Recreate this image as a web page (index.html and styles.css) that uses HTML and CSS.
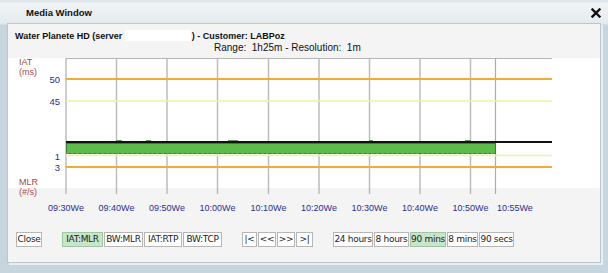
FILE: index.html
```html
<!DOCTYPE html>
<html lang="en">
<head>
  <meta charset="UTF-8" />
  <title>Media Window</title>
  <link rel="stylesheet" href="styles.css">
</head>
<body>
  <div class="window">
    <div class="titlebar">
      <span class="title">Media Window</span>
      <svg class="close-x" width="10" height="10" viewBox="0 0 10 10">
        <path d="M1.5 1.5 L8.5 8.5 M8.5 1.5 L1.5 8.5" stroke="#111" stroke-width="2.4" stroke-linecap="square" />
      </svg>
    </div>

    <div class="panel">
      <div class="info">
        <div class="heading">Water Planete HD (server <span class="masked"></span>) - Customer: LABPoz</div>
        <div class="range">Range:&nbsp; 1h25m - Resolution:&nbsp; 1m</div>
      </div>

      <!-- chart: coordinates match the page -->
      <svg class="chart" width="592" height="162" viewBox="8 53 592 162">
        <rect x="8" y="58" width="592" height="130" fill="#fff" />
        <line x1="66" y1="58.5" x2="552" y2="58.5" stroke="#b4b4b4" />

        <g stroke="#bcbcbc" stroke-width="1.5">
          <line x1="66" y1="58" x2="66" y2="194" />
          <line x1="116.5" y1="58" x2="116.5" y2="194" />
          <line x1="167" y1="58" x2="167" y2="194" />
          <line x1="217.5" y1="58" x2="217.5" y2="194" />
          <line x1="268.5" y1="58" x2="268.5" y2="194" />
          <line x1="319" y1="58" x2="319" y2="194" />
          <line x1="369.5" y1="58" x2="369.5" y2="194" />
          <line x1="420" y1="58" x2="420" y2="194" />
          <line x1="470.5" y1="58" x2="470.5" y2="194" />
        </g>
        <line x1="495.5" y1="58" x2="495.5" y2="194" stroke="#98b898" stroke-width="1.2" />

        <!-- thresholds -->
        <line x1="66" y1="79" x2="552" y2="79" stroke="#f2aa38" stroke-width="2" />
        <line x1="66" y1="101" x2="552" y2="101" stroke="#eef2a4" stroke-width="1.5" />
        <line x1="66" y1="155.5" x2="552" y2="155.5" stroke="#eef2a4" stroke-width="1.5" />
        <line x1="66" y1="167" x2="552" y2="167" stroke="#f2aa38" stroke-width="2" />

        <!-- data -->
        <rect x="66.5" y="143.5" width="429" height="10" fill="#5dbb4b" stroke="#3f7a36" />
        <line x1="66" y1="153.5" x2="495" y2="153.5" stroke="#7a8a6a" stroke-dasharray="3 2" />
        <g fill="#6a9a5e">
          <rect x="116" y="140" width="6" height="2" />
          <rect x="146" y="140" width="5" height="2" />
          <rect x="228" y="140" width="10" height="2" />
          <rect x="369" y="140" width="4" height="2" />
          <rect x="465" y="140" width="6" height="2" />
        </g>
        <line x1="66" y1="142" x2="552" y2="142" stroke="#111" stroke-width="2" />

        <!-- axis labels -->
        <g class="axis-name">
          <text x="19" y="65">IAT</text>
          <text x="19" y="75">(ms)</text>
          <text x="19" y="185">MLR</text>
          <text x="19" y="195">(#/s)</text>
        </g>
        <g class="axis-value" text-anchor="end">
          <text x="60" y="83">50</text>
          <text x="60" y="105">45</text>
          <text x="60" y="160">1</text>
          <text x="60" y="171">3</text>
        </g>
        <g class="axis-time" text-anchor="middle">
          <text x="66" y="211">09:30We</text>
          <text x="116.5" y="211">09:40We</text>
          <text x="167" y="211">09:50We</text>
          <text x="217.5" y="211">10:00We</text>
          <text x="268.5" y="211">10:10We</text>
          <text x="319" y="211">10:20We</text>
          <text x="369.5" y="211">10:30We</text>
          <text x="420" y="211">10:40We</text>
          <text x="470.5" y="211">10:50We</text>
          <text x="497" y="211" text-anchor="start">10:55We</text>
        </g>
      </svg>

      <div class="controls">
        <div class="group">
          <button class="btn w-close">Close</button>
        </div>
        <div class="group">
          <button class="btn active w41">IAT:MLR</button>
          <button class="btn w39">BW:MLR</button>
          <button class="btn w38">IAT:RTP</button>
          <button class="btn w39">BW:TCP</button>
        </div>
        <div class="group">
          <button class="btn w15">|&lt;</button>
          <button class="btn w18">&lt;&lt;</button>
          <button class="btn w18">&gt;&gt;</button>
          <button class="btn w17">&gt;|</button>
        </div>
        <div class="group">
          <button class="btn w40">24 hours</button>
          <button class="btn w35">8 hours</button>
          <button class="btn active w36">90 mins</button>
          <button class="btn w31">8 mins</button>
          <button class="btn w35">90 secs</button>
        </div>
      </div>
    </div>
  </div>
</body>
</html>
```

FILE: styles.css
```css
body {
  margin: 0;
  padding: 0;
  width: 608px;
  height: 273px;
  overflow: hidden;
  background-color: #c6d5de;
  font-family: 'Liberation Sans', Arial, sans-serif;
}
.window {
  height: 273px;
  display: flex;
  flex-direction: column;
  background: linear-gradient(#dfe7ec 0, #dfe7ec 2px, #f1f4f6 3px, #e3eaee 24px, #c6d5de 25px);
}
.titlebar {
  height: 24px;
  display: flex;
  align-items: center;
  justify-content: space-between;
  padding: 1px 7px 0 26px;
  box-sizing: border-box;
}
.title {
  font-weight: bold;
  font-size: 9.5px;
  color: #111;
}
.close-x {
  display: block;
  margin-top: 1px;
}
.panel {
  margin: 0 8px 0 8px;
  height: 238px;
  background-color: #f4f4f4;
  box-shadow: 0 0 0 1px #b9c6cd, 2px 2px 0 1px #e9eef0;
}
.info {
  height: 29px;
  box-sizing: border-box;
  padding: 6px 0 0 7px;
  color: #111;
}
.heading {
  font-weight: bold;
  font-size: 9px;
  line-height: 12px;
  height: 12px;
  white-space: nowrap;
}
.masked {
  display: inline-block;
  width: 66px;
  height: 11px;
  background-color: #fff;
  vertical-align: -2px;
  margin-right: 1px;
}
.range {
  font-size: 10px;
  line-height: 11px;
  height: 11px;
  padding-left: 199px;
}
.chart {
  display: block;
}
.axis-name text {
  fill: #a84c48;
  font-size: 9px;
}
.axis-value text {
  fill: #2e2e8c;
  font-size: 9.5px;
}
.axis-time text {
  fill: #2e2e8c;
  font-size: 9px;
}
.controls {
  display: flex;
  margin-top: 17px;
  padding-left: 8px;
  gap: 20px;
}
.group {
  display: flex;
  gap: 1px;
}
.btn {
  height: 15px;
  padding: 0;
  margin: 0;
  border: 1px solid #b6b6b6;
  background-color: #fff;
  font-family: 'DejaVu Sans', sans-serif;
  font-size: 9px;
  color: #222;
  line-height: 13px;
  text-align: center;
  letter-spacing: -0.3px;
  white-space: nowrap;
}
.btn.active {
  background-color: #c6e5c9;
  border-color: #a3c3a6;
}
.w-close { width: 26px; }
.w15 { width: 15px; }
.w17 { width: 17px; }
.w18 { width: 18px; }
.w31 { width: 31px; }
.w35 { width: 35px; }
.w36 { width: 36px; }
.w38 { width: 38px; }
.w39 { width: 39px; }
.w40 { width: 40px; }
.w41 { width: 41px; }
```
